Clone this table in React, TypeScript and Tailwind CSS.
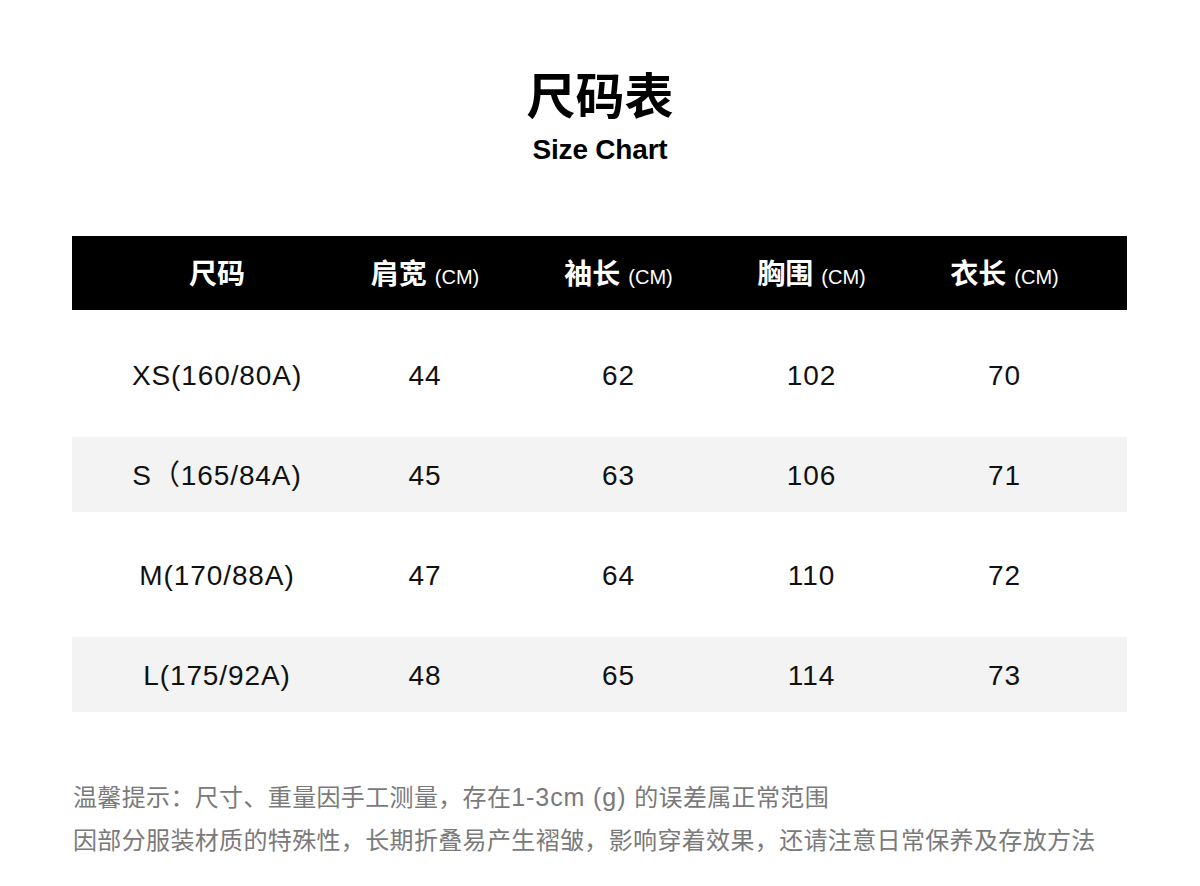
import React from "react";

const FONT = "font-['Liberation_Sans','Noto_Sans_CJK_SC',sans-serif]";

const headers = [
  { zh: "尺码", unit: "" },
  { zh: "肩宽", unit: "(CM)" },
  { zh: "袖长", unit: "(CM)" },
  { zh: "胸围", unit: "(CM)" },
  { zh: "衣长", unit: "(CM)" },
];

const rows = [
  ["XS(160/80A)", "44", "62", "102", "70"],
  ["S（165/84A)", "45", "63", "106", "71"],
  ["M(170/88A)", "47", "64", "110", "72"],
  ["L(175/92A)", "48", "65", "114", "73"],
];

const grid = "grid grid-cols-[256px_194px_193px_193px_193px_1fr] items-center";

export default function App() {
  return (
    <div className={`w-[1200px] h-[886px] bg-white ${FONT} text-[#111]`}>
      <div className="flex flex-col items-center pt-[72px]">
        <div className="text-[49px] leading-[50px] font-bold text-black">尺码表</div>
        <div className="mt-[14px] text-[28px] leading-[28px] font-bold tracking-[-0.2px] text-black">Size Chart</div>
      </div>

      <div className="mx-[72px] mt-[72px] w-[1055px]">
        <div className={`${grid} h-[74px] bg-black text-white`}>
          {headers.map((h, i) => (
            <div key={i} className={`flex items-baseline justify-center pt-[3px] ${i === 0 ? "pl-[34px]" : ""}`}>
              <span className="text-[28px] font-bold">{h.zh}</span>
              {h.unit && <span className="ml-[8px] text-[20px]">{h.unit}</span>}
            </div>
          ))}
          <div />
        </div>

        <div className="mt-[27px] flex flex-col gap-[25px]">
          {rows.map((r, ri) => (
            <div key={ri} className={`${grid} h-[75px] ${ri % 2 === 1 ? "bg-[#f3f3f3]" : "bg-white"}`}>
              {r.map((c, ci) => (
                <div key={ci} className={`text-center text-[28px] tracking-[0.9px] pt-[3px] ${ci === 0 ? "pl-[34px]" : ""}`}>
                  {c}
                </div>
              ))}
              <div />
            </div>
          ))}
        </div>
      </div>

      <div className="mx-[73px] mt-[64px] text-[24px] leading-[43px] text-[#7a7a7a] tracking-[0.35px]">
        <div>
          温馨提示：尺寸、重量因手工测量，存在<span className="text-[25px] tracking-[0.9px]">1-3cm (g) </span>的误差属正常范围
        </div>
        <div>因部分服装材质的特殊性，长期折叠易产生褶皱，影响穿着效果，还请注意日常保养及存放方法</div>
      </div>
    </div>
  );
}
